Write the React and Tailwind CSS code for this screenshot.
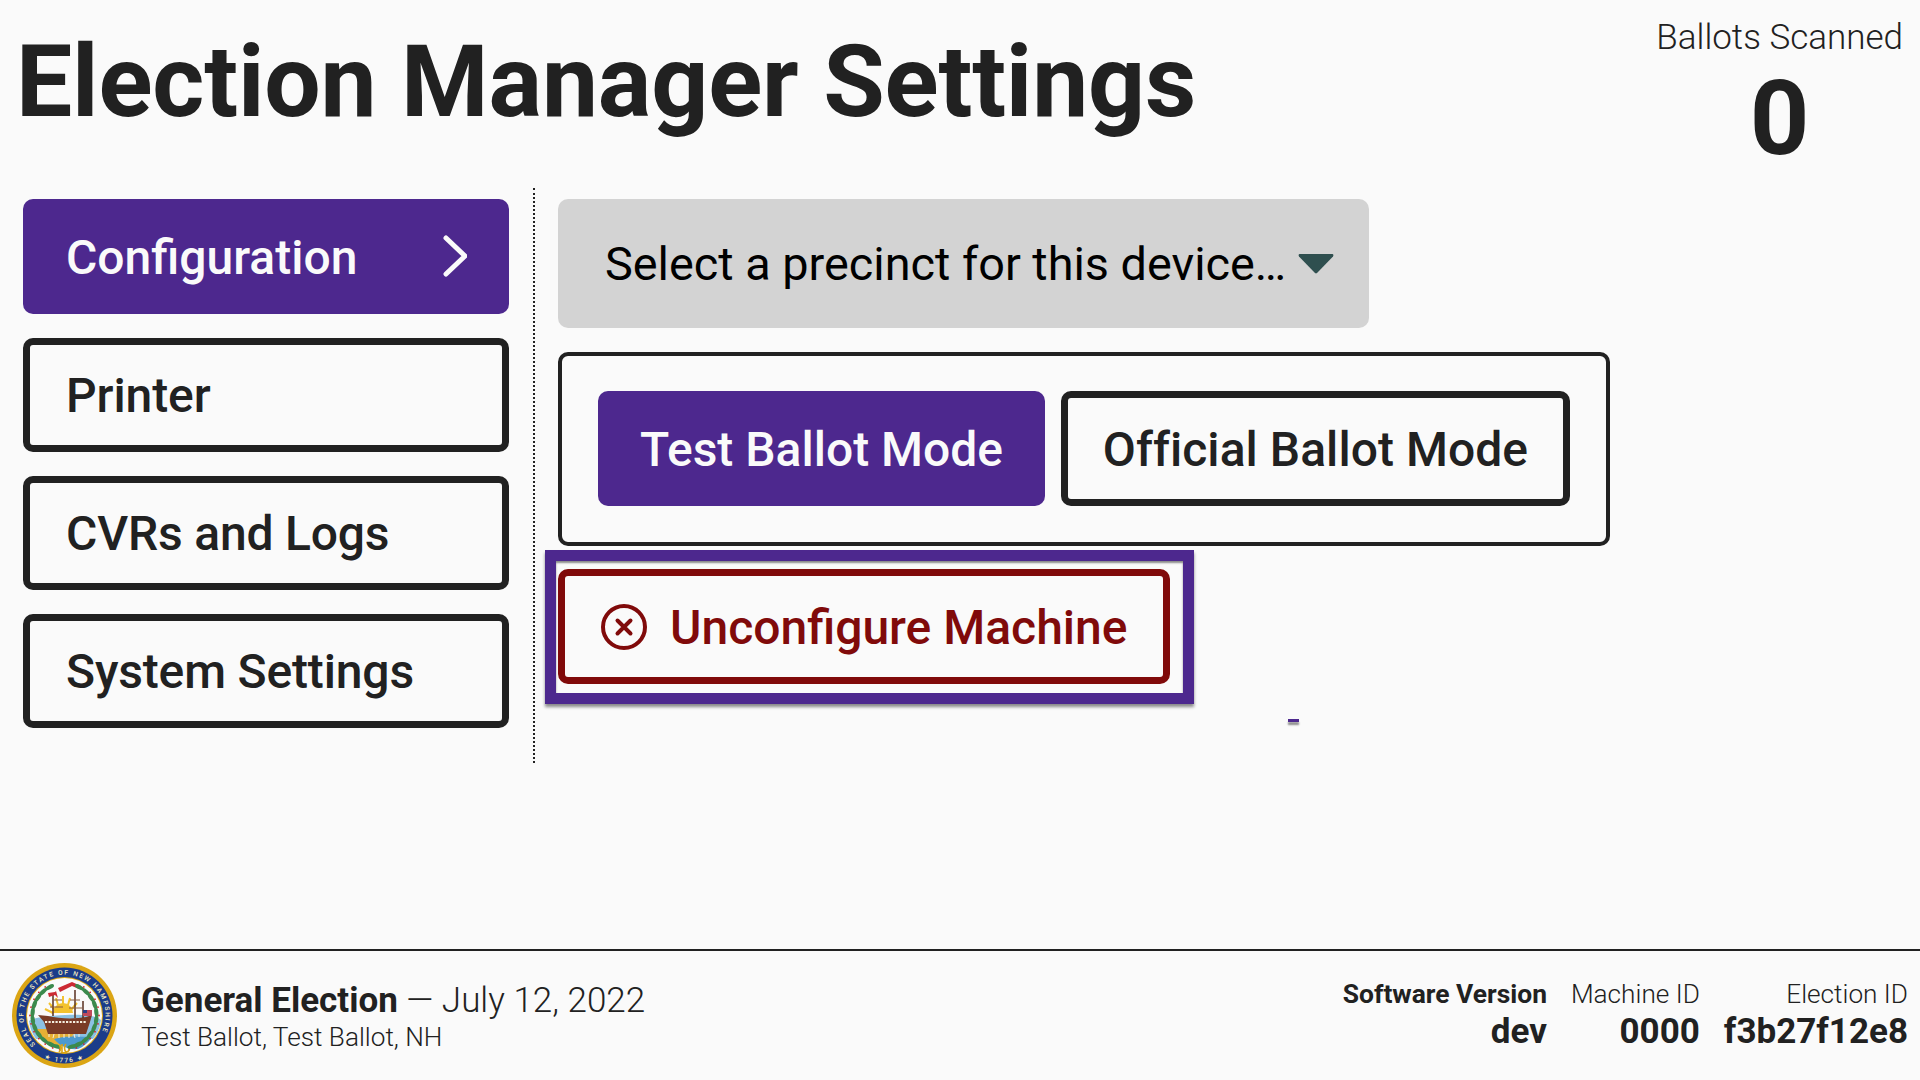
import React from 'react';

const navItems = [
    { label: 'Printer', tracking: 'tracking-[-0.1px]' },
    { label: 'CVRs and Logs', tracking: 'tracking-[-0.19px]' },
    { label: 'System Settings', tracking: 'tracking-[-0.16px]' },
];

// laurel leaves around the inner circle of the seal, angles in degrees from 12 o'clock
const leafAngles = [28, 42, 56, 70, 84, 98, 112, 126, 140, 154, 166];

const Seal = () => (
    <svg viewBox="0 0 105 105" className="w-[105px] h-[105px] shrink-0">
        <defs>
            <path id="sealTop" d="M 23.5 81.5 A 41 41 0 1 1 81.5 81.5" />
            <path id="sealBottom" d="M 20 86 A 46 46 0 0 0 85 86" />
        </defs>
        <circle cx="52.5" cy="52.5" r="52.5" fill="#dba514" />
        <circle cx="52.5" cy="52.5" r="48" fill="#1b3c8a" />
        <circle cx="52.5" cy="52.5" r="38.5" fill="#dba514" />
        <circle cx="52.5" cy="52.5" r="37.5" fill="#fafafa" />
        <text fontFamily="Roboto, sans-serif" fontSize="6.5" fontWeight="500" fill="#f6ecc0" letterSpacing="1.6">
            <textPath href="#sealTop">SEAL OF THE STATE OF NEW HAMPSHIRE</textPath>
        </text>
        <text fontFamily="Roboto, sans-serif" fontSize="6.5" fontWeight="500" fill="#f6ecc0" letterSpacing="1.4" textAnchor="middle">
            <textPath href="#sealBottom" startOffset="50%">★ 1776 ★</textPath>
        </text>

        <path d="M17 58c3-3 17-5 36-6s32 1 36 5c-1 8-4 14-8 19H24c-4-5-6-11-7-18z" fill="#8cc2e4" />
        <path d="M24 66h44l-8 7 8 3-10 7H38c-6-4-11-10-14-17z" fill="#e6b035" />
        <path d="M42 76c8-3 22-3 38-2-4 6-9 10-14 12-10 1-18-3-24-10z" fill="#4d9ad0" />
        <path d="M41 50a10 10 0 0 1 20 0z" fill="#f3c22f" />
        <path d="M51 33v14M44 35l3.500 12M58 35l-3.500 12M37 40l7 8M65 40l-7 8M33 46l8 4" stroke="#f3c22f" strokeWidth="2" />

        <path d="M26 52l10 1c12 3 28 3 38 1l6-2-2 7-4 12H36l-4-12z" fill="#7a3b26" />
        <path d="M33 59h42" stroke="#f5f0e0" strokeWidth="1.800" strokeDasharray="2.200 1.300" />
        <path d="M37 71v3M42 71l-1 4M47 71v4M52 71v4M57 71v4M62 71l1 4M67 71v3" stroke="#f5f0e0" strokeWidth="1" />
        <path d="M41 53V30M63 55V27M71 55V38" stroke="#5a3020" strokeWidth="1.500" />
        <path d="M41 37h9M38 44h13M58 37h10M57 45h13" stroke="#8a5a3c" strokeWidth="1" />
        <path d="M36 30l7-1 1-1 2 7-3-3-6 2zM46 25l14-6 9 4-2 3-7-3-12 6z" fill="#cc2a33" />
        <rect x="71" y="47" width="9" height="6" fill="#c04a5c" />
        <rect x="71" y="47" width="4" height="3" fill="#2b3f86" />

        {leafAngles.map(a => (
            <g key={a}>
                <ellipse cx="52.500" cy="20.500" rx="5" ry="2.100" fill="#3c8a4d" transform={`rotate(${a} 52.500 52.500)`} />
                <ellipse cx="52.500" cy="20.500" rx="5" ry="2.100" fill="#3c8a4d" transform={`rotate(${-a} 52.500 52.500)`} />
                <circle cx="52.500" cy="18" r="0.900" fill="#c8242c" transform={`rotate(${a + 6} 52.500 52.500)`} />
                <circle cx="52.500" cy="18" r="0.900" fill="#c8242c" transform={`rotate(${-a - 6} 52.500 52.500)`} />
            </g>
        ))}
        {/* ribbon tying the wreath */}
        <path d="M47 82c2 1 2 5 0 7M50 81v8M54 81c-2 2-2 6 0 8 2 0 3-1 3-3M49 89c2 1 4 1 6 0" fill="none" stroke="#dba514" strokeWidth="1.600" />
    </svg>
);

const App = () => {
    return (
        <div className="flex flex-col h-screen bg-[#fafafa] text-[#212121] font-['Roboto',sans-serif] overflow-hidden">
            <main className="flex-1 flex flex-col min-h-0">
                <header className="flex justify-between items-start h-[199px] pl-[16px] pr-[17px]">
                    <h1 className="text-[100px] leading-[116px] font-bold mt-[24px] tracking-[-0.15px]">Election Manager Settings</h1>
                    <div className="flex flex-col items-center mt-[17px]">
                        <span className="text-[35px] leading-[42px] font-light">Ballots Scanned</span>
                        <span className="text-[104px] leading-[104px] font-bold mt-[8px]">0</span>
                    </div>
                </header>

                <div className="flex items-start">
                    <nav className="w-[486px] ml-[23px] flex flex-col gap-[24px]">
                        <div className="h-[115px] bg-[#4d288e] text-[#fafafa] rounded-[10px] flex items-center justify-between pl-[43px] pr-[42px] text-[48px] font-medium">
                            <span className="mt-[2px]">Configuration</span>
                            <svg viewBox="0 0 24 42" className="w-[24px] h-[42px] -mt-[2px]" fill="none" stroke="currentColor" strokeWidth="5" strokeLinecap="round" strokeLinejoin="round">
                                <path d="M3 3l19 18L3 39" />
                            </svg>
                        </div>
                        {navItems.map(item => (
                            <div key={item.label} className={`h-[114px] border-[7px] border-[#212121] rounded-[10px] flex items-center pl-[36px] text-[48px] font-medium ${item.tracking}`}>
                                <span className="mt-[2px]">{item.label}</span>
                            </div>
                        ))}
                    </nav>

                    <div className="w-0 h-[575px] -mt-[11px] ml-[24px] border-l-2 border-dotted border-[#212121]" />

                    <section className="relative ml-[23px] flex flex-col items-start">
                        <div className="h-[129px] w-[811px] bg-[#d3d3d3] rounded-[10px] flex items-center pl-[47px] text-[46.8px] text-black">
                            <span className="mt-[2px]">Select a precinct for this device…</span>
                            <svg viewBox="0 0 36 21" className="w-[36px] h-[21px] ml-[12px] -mt-[1px]">
                                <path d="M2 1h32c1 0 2 1 1 2.500L19 20c-.6.6-1.400.6-2 0L1 3.500C0 2 1 1 2 1z" fill="#2f4f4f" />
                            </svg>
                        </div>

                        <div className="mt-[24px] w-[1052px] h-[194px] border-[4px] border-[#212121] rounded-[10px] flex items-start pt-[35px] pl-[36px] gap-[16px]">
                            <div className="w-[447px] h-[115px] bg-[#4d288e] text-[#fafafa] rounded-[10px] flex items-center justify-center text-[48px] font-medium">
                                <span className="mt-[2px]">Test Ballot Mode</span>
                            </div>
                            <div className="w-[509px] h-[115px] border-[7px] border-[#212121] rounded-[10px] flex items-center justify-center text-[48px] font-medium tracking-[0.05px]">
                                <span className="mt-[2px]">Official Ballot Mode</span>
                            </div>
                        </div>

                        <div className="mt-[4px] -ml-[13px] border-[11px] border-[#4d288e] pl-[2px] pr-[13px] pt-[8px] pb-[9px] shadow-[0_3px_3px_rgba(0,0,0,0.45),inset_0_2px_2px_rgba(0,0,0,0.45)]">
                            <div className="w-[612px] h-[115px] border-[7px] border-[#800a0a] rounded-[10px] flex items-center pl-[36px] text-[48px] font-medium text-[#800a0a]">
                                <svg viewBox="0 0 46 46" className="w-[46px] h-[46px] mr-[23px]" fill="none" stroke="#800a0a">
                                    <circle cx="23" cy="23" r="21" strokeWidth="4" />
                                    <path d="M16.500 16.500l13 13M29.500 16.500l-13 13" strokeWidth="4" strokeLinecap="round" />
                                </svg>
                                <span className="mt-[2px]">Unconfigure Machine</span>
                            </div>
                        </div>

                        {/* small leftover focus mark under the button */}
                        <div className="absolute left-[730px] top-[520px] w-[11px] h-[3px] bg-[#4d288e] shadow-[0_3px_2px_rgba(0,0,0,0.45)]" />
                    </section>
                </div>
            </main>

            <footer className="h-[131px] shrink-0 border-t-2 border-[#212121] flex items-center justify-between pl-[12px] pr-[12px]">
                <div className="flex items-center gap-[24px]">
                    <Seal />
                    <div className="flex flex-col">
                        <div className="text-[35px] leading-[42px] font-light">
                            <span className="font-bold">General Election</span> — July 12, 2022
                        </div>
                        <div className="text-[26.2px] leading-[30px] font-light">Test Ballot, Test Ballot, NH</div>
                    </div>
                </div>
                <div className="flex gap-[24px] text-right">
                    <div className="flex flex-col">
                        <span className="text-[26.400px] leading-[30px] font-bold">Software Version</span>
                        <span className="text-[35px] leading-[42px] font-bold mt-[2px]">dev</span>
                    </div>
                    <div className="flex flex-col">
                        <span className="text-[26.200px] leading-[30px] font-light">Machine ID</span>
                        <span className="text-[35px] leading-[42px] font-bold mt-[2px]">0000</span>
                    </div>
                    <div className="flex flex-col">
                        <span className="text-[26.200px] leading-[30px] font-light">Election ID</span>
                        <span className="text-[35px] leading-[42px] font-bold mt-[2px]">f3b27f12e8</span>
                    </div>
                </div>
            </footer>
        </div>
    );
};

export default App;
